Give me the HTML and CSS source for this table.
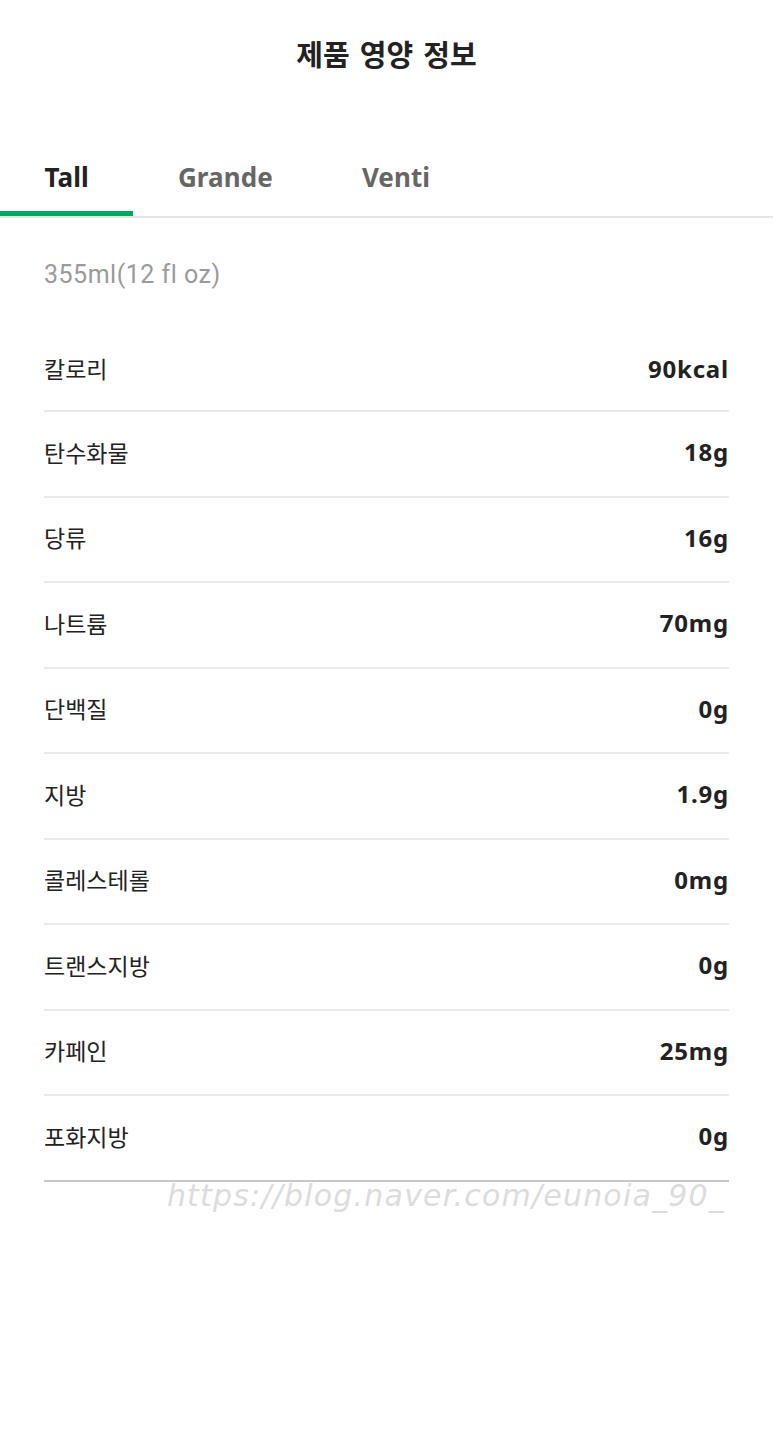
FILE: index.html
```html
<!DOCTYPE html>
<html lang="ko">
<head>
<meta charset="utf-8">
<link rel="stylesheet" href="styles.css">
</head>
<body>
<header class="top"><h1 class="title">제품 영양 정보</h1></header>
<nav class="tabs">
  <div class="tab active">Tall</div>
  <div class="tab">Grande</div>
  <div class="tab">Venti</div>
</nav>
<main class="content">
  <p class="size">355ml(12 fl oz)</p>
  <ul class="rows">
    <li class="row"><span class="label">칼로리</span><span class="value">90kcal</span></li>
    <li class="row"><span class="label">탄수화물</span><span class="value">18g</span></li>
    <li class="row"><span class="label">당류</span><span class="value">16g</span></li>
    <li class="row"><span class="label">나트륨</span><span class="value">70mg</span></li>
    <li class="row"><span class="label">단백질</span><span class="value">0g</span></li>
    <li class="row"><span class="label">지방</span><span class="value">1.9g</span></li>
    <li class="row"><span class="label">콜레스테롤</span><span class="value">0mg</span></li>
    <li class="row"><span class="label">트랜스지방</span><span class="value">0g</span></li>
    <li class="row"><span class="label">카페인</span><span class="value">25mg</span></li>
    <li class="row last"><span class="label">포화지방</span><span class="value">0g</span></li>
  </ul>
  <div class="watermark">https://blog.naver.com/eunoia_90_</div>
</main>
</body>
</html>
```
FILE: styles.css
```css
* { box-sizing: border-box; }
html, body { margin: 0; padding: 0; background: #fff; }
body {
  width: 773px;
  height: 1437px;
  font-family: "Noto Sans", "Noto Sans CJK KR", sans-serif;
  color: #222;
}
.top {
  height: 106px;
  display: flex;
  align-items: center;
  justify-content: center;
}
.title {
  margin: 0;
  font-family: "Noto Sans CJK KR", sans-serif;
  font-size: 29px;
  font-weight: 700;
  color: #222;
  word-spacing: 2px;
}
.tabs {
  margin-top: 34px;
  display: flex;
  border-bottom: 2px solid #e6e6e6;
}
.tab {
  padding: 2px 44.5px 0;
  height: 76px;
  display: flex;
  align-items: center;
  font-family: "Noto Sans", sans-serif;
  font-size: 26px;
  font-weight: 700;
  letter-spacing: 0.1px;
  color: #666;
  border-bottom: 5px solid transparent;
}
.tab.active {
  color: #222;
  border-bottom-color: #00a862;
}
.content {
  padding: 0 44px;
}
.size {
  margin: 0;
  height: 112px;
  display: flex;
  align-items: center;
  padding-top: 1px;
  font-family: Roboto, sans-serif;
  font-size: 25px;
  letter-spacing: 0.5px;
  color: #9a9a9a;
}
.rows {
  list-style: none;
  margin: 0;
  padding: 0;
}
.row {
  height: 85.5px;
  display: flex;
  align-items: center;
  justify-content: space-between;
  border-bottom: 2px solid #eaeaea;
  padding-bottom: 4px;
}
.row:first-child { height: 82px; }
.row.last { border-bottom-color: #c8c8c8; }
.label {
  font-family: "Noto Sans CJK KR", sans-serif;
  font-size: 23px;
  color: #222;
}
.value {
  font-family: "Noto Sans", sans-serif;
  font-size: 24px;
  font-weight: 700;
  letter-spacing: 0.8px;
  color: #222;
}
.watermark {
  margin-top: -4px;
  margin-right: 4px;
  text-align: right;
  font-family: "DejaVu Sans", sans-serif;
  font-style: italic;
  font-size: 30px;
  color: #dcdcdc;
  letter-spacing: 1.2px;
}
```
